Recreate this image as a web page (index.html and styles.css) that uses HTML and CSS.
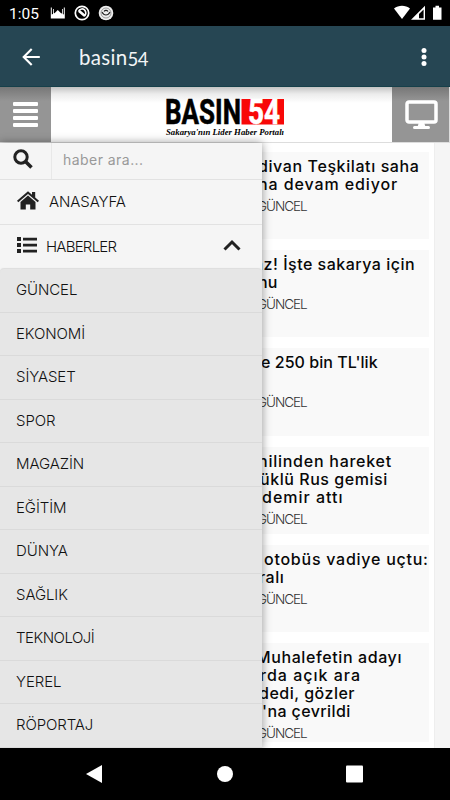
FILE: index.html
```html
<!DOCTYPE html>
<html lang="tr">
<head>
<meta charset="utf-8">
<title>basin54</title>
<link rel="stylesheet" href="styles.css">
</head>
<body>
<div class="phone">
  <div class="status">
    <span class="clock">1:05</span>
    <svg class="notes" width="66" height="16" viewBox="0 0 66 16">
      <path fill="#fff" d="M.8 13.500V2.500h1v7l3-1.500 3-3 3 3 3 1.500v-7h1v11zM3 4h.8v5H3zM12 4h.8v5H12z"/>
      <g fill="none" stroke="#fff"><circle cx="32" cy="8" r="6.700" stroke-width="1.700"/><path stroke-width="1.600" d="M28.500 6.500c1-3 5-3.500 6.500-1s1 4-.5 5.500"/><path stroke-width="2.600" d="M29 6l6 5"/></g>
      <circle cx="56" cy="8" r="7.300" fill="#eee"/><circle cx="56" cy="8" r="5" fill="none" stroke="#777" stroke-width=".7"/><path fill="none" stroke="#222" stroke-width="1.100" d="M52 7c2 4 6 4 8 0M54 6.500c1-1.500 3-1.500 4 0"/>
    </svg>
    <svg class="signals" width="50" height="16" viewBox="0 0 50 16">
      <path fill="#fff" d="M0 3.500C4.500-.2 11.500-.2 16 3.500L8 14z"/>
      <path fill="#fff" fill-rule="evenodd" d="M17 14.700L31 .8v13.900zM25 13.300h4.600V4.600L25 9z"/>
      <path fill="#fff" d="M39 2.500h2.500V.8h3.500v1.700h2.500v12.200H39z"/>
    </svg>
  </div>
  <div class="appbar">
    <svg class="back" width="18" height="18" viewBox="0 0 18 18"><path fill="none" stroke="#fff" stroke-width="2.100" d="M17.800 9H1.800M9.700 1L1.700 9l8 8"/></svg>
    <span class="title">basin<span class="digits">54</span></span>
    <svg class="more" width="6" height="20" viewBox="0 0 6 20" fill="#fff"><circle cx="3" cy="3.500" r="2.500"/><circle cx="3" cy="10" r="2.500"/><circle cx="3" cy="16.500" r="2.500"/></svg>
  </div>
  <div class="web">
    <header class="site">
      <div class="burger"><i></i><i></i><i></i><i></i></div>
      <svg class="logo" width="120" height="42" viewBox="0 0 120 42">
        <rect x="75.500" y="0" width="42.500" height="25.500" fill="#f80808"/>
        <text class="brand" x="-1" y="25" textLength="76" lengthAdjust="spacingAndGlyphs">BASIN</text>
        <text class="brand white" x="82" y="25" textLength="32" lengthAdjust="spacingAndGlyphs">54</text>
        <text class="slogan" x="0" y="36" textLength="118" lengthAdjust="spacingAndGlyphs">Sakarya'nın Lider Haber Portalı</text>
      </svg>
      <div class="desktop">
        <svg width="34" height="30" viewBox="0 0 34 30"><rect x="2" y="2" width="29" height="20" rx="2" fill="none" stroke="#fff" stroke-width="3.500"/><path stroke="#fff" stroke-width="3" stroke-linecap="round" d="M9.500 27.500h14"/><path fill="#fff" d="M14 22h5l1.500 5h-8z"/></svg>
      </div>
    </header>
    <div class="content">
      <main class="news">
        <article><h2><span class="a1">divan Teşkilatı saha</span><span class="a2">na devam ediyor</span></h2><p>GÜNCEL</p></article>
        <article><h2><span class="b1">az! İşte sakarya için</span><span class="b2">nu</span></h2><p>GÜNCEL</p></article>
        <article><h2><span class="c1">e 250 bin TL'lik</span></h2><p>GÜNCEL</p></article>
        <article><h2><span class="d1">hilinden hareket</span><span class="d2">üklü Rus gemisi</span><span class="d3">demir attı</span></h2><p>GÜNCEL</p></article>
        <article><h2><span class="e1">otobüs vadiye uçtu:</span><span class="e2">ralı</span></h2><p>GÜNCEL</p></article>
        <article><h2><span class="f1">Muhalefetin adayı</span><span class="f2">rda açık ara</span><span class="f3">dedi, gözler</span><span class="f4">'na çevrildi</span></h2><p>GÜNCEL</p></article>
      </main>
      <nav class="drawer">
        <div class="search">
          <div class="find"><svg width="20" height="20" viewBox="0 0 20 20"><g fill="none" stroke="#222" stroke-width="3"><circle cx="8" cy="8" r="6.200"/><path stroke-width="3.600" d="M12.500 12.500l6 6"/></g></svg></div>
          <span class="hint">haber ara...</span>
        </div>
        <div class="item home">
          <svg width="22" height="20" viewBox="0 0 22 20" fill="#222"><path d="M0 9.800L11 .3l4 3.500V1h3.200v5.500L22 9.800l-1.300 1.500L11 3 1.300 11.300z"/><path d="M3.500 11L11 4.600l7.500 6.400v7.500h-5.300v-5H8.800v5H3.500z"/></svg>
          <span>ANASAYFA</span>
        </div>
        <div class="item haber">
          <svg width="20" height="18" viewBox="0 0 20 18" fill="#222"><path d="M0 1h4v4H0zM0 7h4v4H0zM0 13h4v4H0zM6 1.700h14v2.700H6zM6 7.700h14v2.700H6zM6 13.700h14v2.700H6z"/></svg>
          <span>HABERLER</span>
          <svg class="chev" width="18" height="12" viewBox="0 0 18 12"><path fill="none" stroke="#222" stroke-width="3" d="M1.500 10.500L9 3l7.500 7.500"/></svg>
        </div>
        <ul>
          <li>GÜNCEL</li><li>EKONOMİ</li><li>SİYASET</li><li>SPOR</li><li>MAGAZİN</li><li>EĞİTİM</li><li>DÜNYA</li><li>SAĞLIK</li><li class="tight">TEKNOLOJİ</li><li>YEREL</li><li>RÖPORTAJ</li>
        </ul>
      </nav>
    </div>
  </div>
  <div class="navbar">
    <svg width="450" height="52" viewBox="0 0 450 52" fill="#fff"><path d="M102 17v18L86 26z"/><circle cx="225" cy="26" r="8"/><rect x="346" y="17.500" width="17" height="17" rx="1"/></svg>
  </div>
</div>
</body>
</html>
```
FILE: styles.css
```css
* { box-sizing: border-box; }
body { margin: 0; font-family: Inter, "Noto Sans", sans-serif; }
.phone { width: 450px; height: 800px; display: flex; flex-direction: column; overflow: hidden; background: #000; }
.status { height: 26px; flex: none; display: flex; align-items: center; padding: 0 7px 0 9px; }
.clock { color: #fff; font: 15.500px/26px Roboto, sans-serif; width: 41px; padding-top: 2px; }
.signals { margin-left: auto; margin-right: -1px; }
.status svg { flex: none; }
.appbar { height: 61px; flex: none; background: #264653; border-bottom: 1px solid #16404a; display: flex; align-items: center; padding: 1px 23px 0 22px; }
.title { color: #f2f5f6; font: 20.500px/24px Lato, sans-serif; margin-left: 39px; letter-spacing: .3px; padding-top: 2px; }
.digits { font-size: 18.500px; vertical-align: -1px; letter-spacing: -.5px; }
.more { margin-left: auto; }
.web { height: 661px; flex: none; display: flex; flex-direction: column; background: #f5f5f5; overflow: hidden; }
.site { height: 55px; flex: none; display: flex; background: linear-gradient(#c4c4c4, #ececec 7px, #fff 16px); }
.burger { width: 51px; background: linear-gradient(#777, #959595 14px); padding: 15px 13px 0; display: flex; flex-direction: column; gap: 3px; }
.burger i { height: 4px; flex: none; background: #fff; border-radius: 1px; }
.logo { margin: 12px 0 0 115px; overflow: visible; }
.brand { font: 700 35px Roboto, sans-serif; fill: #000; stroke: #000; stroke-width: .6px; }
.white { fill: #fff; stroke: #fff; }
.slogan { font: italic 700 9px "Liberation Serif", serif; fill: #000; }
.desktop { width: 58px; margin-left: auto; background: linear-gradient(#777, #959595 14px); padding: 13px 0 0 13px; border-right: 1px solid #ddd; }
.content { flex: 1; display: grid; grid-template-columns: 450px; grid-template-rows: 606px; border-top: 1px solid #ddd; }
.news, .drawer { grid-area: 1 / 1; }
.news { width: 435px; background: #fff; border-right: 1px solid #eee; padding: 9px 5px 0 6px; display: flex; flex-direction: column; gap: 11px; }
article { background: #f9f9f9; height: 87.200px; flex: none; padding: 5px 0 0 252px; }
article:last-child { height: 99px; }
h2 { margin: 0; min-height: 36px; font-size: 16px; line-height: 18px; font-weight: 450; color: #080808; }
h2 span { display: block; white-space: nowrap; }
.a1 { letter-spacing: .6px; }
.a2 { letter-spacing: .9px; }
.b1 { margin-left: -4px; letter-spacing: .5px; }
.c1 { margin-left: 3px; letter-spacing: .05px; }
.d1 { letter-spacing: .75px; }
.d2 { margin-left: 2px; letter-spacing: .55px; }
.d3 { margin-left: 4px; letter-spacing: 1px; }
.e1 { margin-left: 6px; letter-spacing: .75px; }
.e2 { margin-left: 1px; letter-spacing: .5px; }
.f1 { margin-left: -2px; letter-spacing: .6px; }
.f2 { margin-left: 2px; letter-spacing: 1px; }
.f3 { margin-left: 1px; letter-spacing: .5px; }
.f4 { margin-left: 4px; letter-spacing: .4px; }
article p { margin: 4px 0 0 -1px; font-size: 13.500px; line-height: 18px; font-weight: 300; color: #333; letter-spacing: -1px; }
.drawer { width: 262px; background: #f5f5f5; box-shadow: 0 0 9px rgba(0,0,0,.42); z-index: 1; color: #111; font-size: 15px; font-weight: 300; letter-spacing: -.1px; }
.search { height: 37px; display: flex; border-bottom: 1px solid #e2e2e2; }
.find { width: 52px; border-right: 1px solid #e8e8e8; padding: 6px 0 0 13px; }
.hint { margin-left: 11px; line-height: 34px; color: #999; font-size: 14px; font-weight: 400; letter-spacing: .45px; }
.item { display: flex; align-items: center; padding: 0 21px 0 17px; }
.home { height: 45px; border-bottom: 1px solid #e2e2e2; gap: 10px; padding-bottom: 1px; }
.home svg { margin-top: -2px; }
.haber { height: 44px; gap: 9px; padding-bottom: 1px; letter-spacing: -.75px; }
.haber svg { margin-top: -3px; }
.haber .chev { margin-left: auto; }
ul { list-style: none; margin: 0; padding: 0; background: #e6e6e6; border-radius: 4px 4px 0 0; box-shadow: 0 -1px 1px #ddd; }
li { height: 43.500px; line-height: 42px; padding-left: 16px; border-bottom: 1px solid #dadada; }
.tight { letter-spacing: -.5px; }
.navbar { flex: 1; }
.navbar svg { display: block; }
```
